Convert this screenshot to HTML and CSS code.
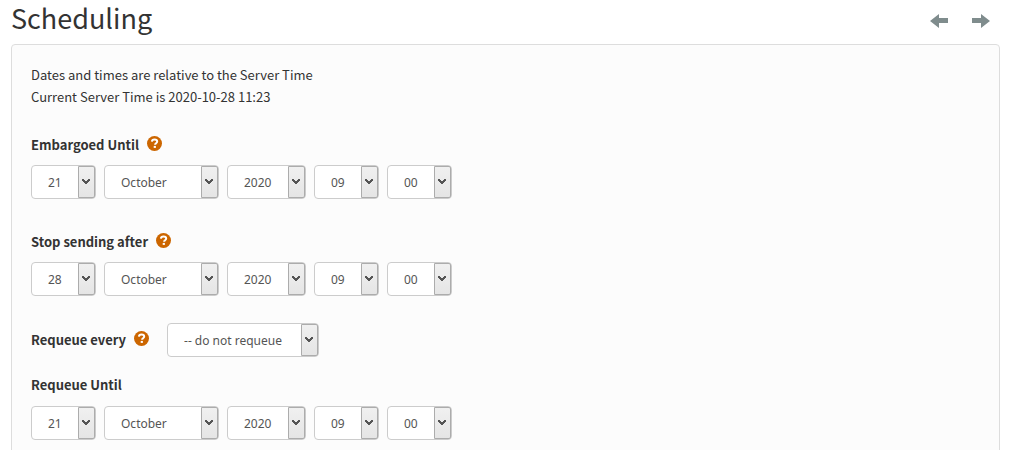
FILE: index.html
```html
<!DOCTYPE html>
<html lang="en">
<head>
<meta charset="utf-8">
<meta name="viewport" content="width=device-width, initial-scale=1">
<title>Scheduling</title>
<link rel="stylesheet" href="styles.css">
</head>
<body>
<svg class="sprite" aria-hidden="true">
  <symbol id="chevron" viewBox="0 0 8 6"><path d="M0 0h2v1h1v1h2V1h1V0h2v2H7v1H6v1H5v1H3V4H2V3H1V2H0z"/></symbol>
  <symbol id="help" viewBox="0 0 15 15"><circle class="disc" cx="7.5" cy="7.5" r="7.5"/><path class="mark" d="M4.900 5.600C5 4.100 6 3.400 7.500 3.400c1.600 0 2.700.8 2.700 2.100 0 1.700-2.100 1.800-2.100 3.200"/><path class="dot" d="M6.700 9.900h2.200v2H6.700z"/></symbol>
</svg>
<header class="header">
  <h1 class="title">Scheduling</h1>
  <nav class="pager">
    <a class="arrow" href="#previous" aria-label="Previous"><svg viewBox="0 0 18 14"><path d="M0 7l9-7v4h9v5H9v5z"/></svg></a>
    <a class="arrow" href="#next" aria-label="Next"><svg viewBox="0 0 18 14"><path d="M18 7L9 0v4H0v5h9v5z"/></svg></a>
  </nav>
</header>
<main class="panel">
  <p class="intro">Dates and times are relative to the Server Time<br>Current Server Time is 2020-10-28 11:23</p>

  <section class="field">
    <div class="caption"><label for="embargo-day">Embargoed Until</label><button class="help" type="button" aria-label="Help"><svg><use href="#help"/></svg></button></div>
    <div class="selects">
      <span class="select short"><select id="embargo-day"><option>21</option></select><svg class="chevron"><use href="#chevron"/></svg></span>
      <span class="select month"><select aria-label="Embargo month"><option>October</option></select><svg class="chevron"><use href="#chevron"/></svg></span>
      <span class="select year"><select aria-label="Embargo year"><option>2020</option></select><svg class="chevron"><use href="#chevron"/></svg></span>
      <span class="select short"><select aria-label="Embargo hour"><option>09</option></select><svg class="chevron"><use href="#chevron"/></svg></span>
      <span class="select short"><select aria-label="Embargo minute"><option>00</option></select><svg class="chevron"><use href="#chevron"/></svg></span>
    </div>
  </section>

  <section class="field">
    <div class="caption"><label for="stop-day">Stop sending after</label><button class="help" type="button" aria-label="Help"><svg><use href="#help"/></svg></button></div>
    <div class="selects">
      <span class="select short"><select id="stop-day"><option>28</option></select><svg class="chevron"><use href="#chevron"/></svg></span>
      <span class="select month"><select aria-label="Stop month"><option>October</option></select><svg class="chevron"><use href="#chevron"/></svg></span>
      <span class="select year"><select aria-label="Stop year"><option>2020</option></select><svg class="chevron"><use href="#chevron"/></svg></span>
      <span class="select short"><select aria-label="Stop hour"><option>09</option></select><svg class="chevron"><use href="#chevron"/></svg></span>
      <span class="select short"><select aria-label="Stop minute"><option>00</option></select><svg class="chevron"><use href="#chevron"/></svg></span>
    </div>
  </section>

  <section class="field inline">
    <div class="caption"><label for="requeue-every">Requeue every</label><button class="help" type="button" aria-label="Help"><svg><use href="#help"/></svg></button></div>
    <span class="select interval"><select id="requeue-every"><option>-- do not requeue</option></select><svg class="chevron"><use href="#chevron"/></svg></span>
  </section>

  <section class="field last">
    <div class="caption"><label for="requeue-day">Requeue Until</label></div>
    <div class="selects">
      <span class="select short"><select id="requeue-day"><option>21</option></select><svg class="chevron"><use href="#chevron"/></svg></span>
      <span class="select month"><select aria-label="Requeue month"><option>October</option></select><svg class="chevron"><use href="#chevron"/></svg></span>
      <span class="select year"><select aria-label="Requeue year"><option>2020</option></select><svg class="chevron"><use href="#chevron"/></svg></span>
      <span class="select short"><select aria-label="Requeue hour"><option>09</option></select><svg class="chevron"><use href="#chevron"/></svg></span>
      <span class="select short"><select aria-label="Requeue minute"><option>00</option></select><svg class="chevron"><use href="#chevron"/></svg></span>
    </div>
  </section>
</main>
</body>
</html>
```
FILE: styles.css
```css
*, *::after { box-sizing: border-box; }
body {
  margin: 0 10px 0 11px;
  background: #fff;
  color: #333;
  font: 13px/22px "Noto Sans CJK SC", "Noto Sans", sans-serif;
}
.sprite { display: none; }
.header {
  display: flex;
  justify-content: space-between;
  align-items: flex-start;
  height: 44px;
  padding-right: 10px;
}
.title { margin: 0; font-size: 27px; line-height: 36px; font-weight: 400; }
.pager { display: flex; gap: 24px; padding-top: 14px; }
.arrow { display: block; }
.arrow svg { display: block; width: 18px; height: 14px; fill: #7f8c8d; }
.panel {
  padding: 19px;
  border: 1px solid #ddd;
  border-radius: 4px;
  background: #fcfcfc;
}
.intro { margin: 0 0 26px; }
.field { margin-bottom: 32px; }
.caption { display: flex; align-items: center; gap: 8px; font-weight: 700; }
.help { padding: 0 0 3px; border: 0; background: none; }
.help svg { display: block; width: 15px; height: 15px; }
.disc { fill: #cc6600; }
.mark { fill: none; stroke: #fff; stroke-width: 2; }
.dot { fill: #fff; }
.selects { display: flex; flex-wrap: wrap; gap: 8px; margin-top: 9px; }
.select { position: relative; display: block; height: 34px; }
.short { width: 65px; }
.month { width: 115px; }
.year { width: 79px; }
.interval { width: 152px; }
.select select {
  appearance: none;
  width: 100%;
  height: 34px;
  padding: 2px 18px 0 16px;
  border: 1px solid #ccc;
  border-radius: 4px;
  background: #fff;
  color: #555;
  font: 12px/20px "Noto Sans", sans-serif;
}
.select::after {
  content: "";
  position: absolute;
  top: 1px;
  right: 1px;
  bottom: 1px;
  width: 17px;
  border: 1px solid #acacac;
  border-radius: 0 2px 2px 0;
  background: linear-gradient(#f0f0f0, #e5e5e5);
  pointer-events: none;
}
.chevron {
  position: absolute;
  z-index: 1;
  top: 14px;
  right: 6px;
  width: 8px;
  height: 6px;
  fill: #555;
  pointer-events: none;
}
.inline { display: flex; align-items: center; gap: 18px; margin: -5px 0 17px; }
.last { margin-bottom: 0; }
.last .selects { margin-top: 10px; }
```
